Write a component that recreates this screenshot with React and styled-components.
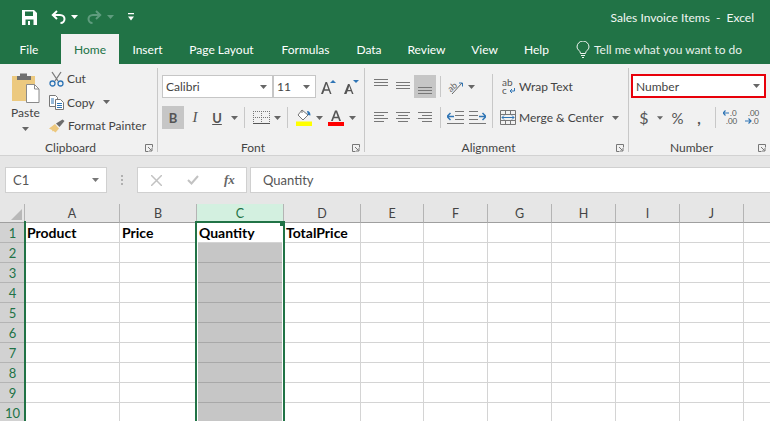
import React from "react";
import styled, { createGlobalStyle } from "styled-components";

const GlobalStyle = createGlobalStyle`
  html, body { margin: 0; padding: 0; background: #fff; }
  * { box-sizing: border-box; }
`;

const UI = `Lato, "Open Sans", sans-serif`;

const Page = styled.div`
  width: 770px;
  height: 421px;
  overflow: hidden;
  font-family: ${UI};
  font-size: 12px;
  color: #444;
  display: flex;
  flex-direction: column;
`;

const TitleBar = styled.div`
  height: 34px;
  background: #217346;
  display: flex;
  align-items: center;
  padding-left: 22px;
  color: #fff;
`;

const QuickTool = styled.span`
  display: flex;
  margin-right: ${(p) => p.$mr || 0}px;
`;

const DocTitle = styled.div`
  margin-left: auto;
  margin-right: 16px;
  font-size: 12px;
  white-space: pre;
  color: #f2f7f4;
`;

const TabBar = styled.div`
  height: 30px;
  background: #217346;
  display: flex;
  padding-left: 8px;
  color: #fff;
`;

const Tab = styled.div`
  width: ${(p) => p.$w}px;
  margin-right: ${(p) => p.$mr ?? 3}px;
  display: flex;
  align-items: center;
  justify-content: center;
  font-size: 12px;
  white-space: nowrap;
  background: ${(p) => (p.$active ? "#f1f1f1" : "transparent")};
  color: ${(p) => (p.$active ? "#217346" : "#fff")};
`;

const TellMe = styled.div`
  display: flex;
  align-items: center;
  gap: 4px;
  margin-left: 12px;
  font-size: 12px;
  white-space: nowrap;
  color: #e8f1ec;
`;

const Ribbon = styled.div`
  height: 92px;
  background: #f1f1f1;
  border-bottom: 1px solid #d2d2d2;
  display: flex;
  padding-top: 4px;
`;

const Group = styled.section`
  width: ${(p) => p.$w}px;
  height: 84px;
  flex: none;
  display: flex;
  flex-direction: column;
  border-right: ${(p) => (p.$last ? "none" : "1px solid #c8c8c8")};
  padding-left: ${(p) => p.$pl || 0}px;
`;

const GroupBody = styled.div`
  flex: 1;
  display: flex;
  flex-direction: column;
  min-height: 0;
`;

const GroupFooter = styled.div`
  height: 14px;
  flex: none;
  margin-bottom: -2px;
  margin-left: ${(p) => -(p.$pl || 0)}px;
  display: grid;
  grid-template-columns: 1fr auto 1fr;
  align-items: center;
  font-size: 12px;
  color: #444;
  padding-right: 4px;
`;

const GroupName = styled.span`
  grid-column: 2;
  transform: translateX(${(p) => p.$dx || 0}px);
`;

const Launcher = styled.span`
  grid-column: 3;
  justify-self: end;
  display: flex;
`;

const ToolRow = styled.div`
  display: flex;
  align-items: center;
  height: 23px;
  margin-top: ${(p) => p.$mt || 0}px;
`;

const Tool = styled.div`
  width: ${(p) => p.$w}px;
  height: 23px;
  flex: none;
  display: flex;
  align-items: center;
  justify-content: center;
  background: ${(p) => (p.$on ? "#c6c6c6" : "transparent")};
  font-size: ${(p) => p.$size || 13}px;
  color: #555;
`;

const ItalicTool = styled(Tool)`
  font-style: italic;
  font-family: "Liberation Serif", serif;
  font-size: 15px;
`;

const UnderlineTool = styled(Tool)`
  text-decoration: underline;
`;

const Divider = styled.div`
  width: 1px;
  height: 21px;
  flex: none;
  background: #c8c8c8;
  margin: 0 ${(p) => p.$mr ?? 4}px 0 ${(p) => p.$ml ?? 4}px;
`;

// runs through both tool rows, the second row leaves a gap for it
const TallDivider = styled(Divider)`
  height: 54px;
  align-self: flex-start;
  margin-top: -1px;
`;

const DividerGap = styled.div`
  width: 1px;
  flex: none;
  margin: 0 ${(p) => p.$mr}px 0 ${(p) => p.$ml}px;
`;

const Combo = styled.div`
  width: ${(p) => p.$w}px;
  height: 23px;
  flex: none;
  background: #fff;
  border: 1px solid #c6c6c6;
  display: flex;
  align-items: center;
  justify-content: space-between;
  padding: 0 5px 0 3px;
  font-size: 12px;
  color: #444;
`;

const HighlightCombo = styled(Combo)`
  height: 24px;
  border: 2px solid #e8000a;
  padding: 0 4px 0 3px;
  margin-top: -1px;
`;

const ClipboardBody = styled.div`
  flex: 1;
  display: flex;
`;

const PasteButton = styled.div`
  width: 49px;
  flex: none;
  display: flex;
  flex-direction: column;
  align-items: center;
  padding: 4px 0 0 2px;
  font-size: 12px;
  line-height: 16px;
`;

const PasteLabel = styled.span`
  margin: 2px 0 6px;
`;

const ClipActions = styled.div`
  display: flex;
  flex-direction: column;
  margin-top: -1px;
`;

const ClipAction = styled.div`
  height: 23.5px;
  display: flex;
  align-items: center;
  gap: 3px;
  white-space: nowrap;
  font-size: 12px;
`;

const CopyCaret = styled.span`
  display: flex;
  margin-left: 6px;
`;

const LabelledTool = styled.div`
  display: flex;
  align-items: center;
  gap: 3px;
  white-space: nowrap;
  font-size: 12px;
  margin-left: ${(p) => p.$ml || 0}px;
`;

const FormulaStrip = styled.div`
  height: 48px;
  background: #e6e6e6;
  display: flex;
  align-items: flex-start;
  padding: 11px 0 0 5px;
`;

const NameBox = styled.div`
  width: 102px;
  height: 26px;
  background: #fff;
  border: 1px solid #d0d0d0;
  display: flex;
  align-items: center;
  justify-content: space-between;
  padding: 0 7px;
  font-size: 13px;
  color: #555;
`;

const Grip = styled.div`
  width: 30px;
  height: 26px;
  display: flex;
  align-items: center;
  justify-content: center;
`;

const FormulaTools = styled.div`
  width: 110px;
  height: 26px;
  background: #fff;
  border: 1px solid #d0d0d0;
  display: flex;
  align-items: center;
  gap: 25px;
  padding-left: 13px;
  margin-right: 3px;
`;

const FormulaInput = styled.div`
  flex: 1;
  height: 26px;
  background: #fff;
  border: 1px solid #d0d0d0;
  border-right: none;
  display: flex;
  align-items: center;
  padding-left: 12px;
  font-size: 13px;
  color: #555;
`;

const FxLabel = styled.span`
  font-family: "Liberation Serif", serif;
  font-style: italic;
  font-size: 13px;
  color: #666;
  font-weight: bold;
`;

const Sheet = styled.div`
  position: relative;
  flex: 1;
  display: grid;
  grid-template-columns: 25px 95px 77px 87px 77px 63px 64px 64px 64px 64px 64px 64px;
  grid-auto-rows: 20px;
  grid-template-rows: 19px;
  background: #fff;
  overflow: hidden;
`;

const Corner = styled.div`
  background: #e6e6e6;
  border-bottom: 1px solid #9f9f9f;
  border-right: 1px solid #b4b4b4;
  position: relative;
  &::after {
    content: "";
    position: absolute;
    right: 2px;
    bottom: 2px;
    border-style: solid;
    border-width: 0 0 11px 11px;
    border-color: transparent transparent #b8b8b8 transparent;
  }
`;

const ColHeader = styled.div`
  background: ${(p) => (p.$on ? "#d3f0e0" : "#e6e6e6")};
  color: ${(p) => (p.$on ? "#217346" : "#444")};
  border-right: 1px solid #b4b4b4;
  border-bottom: 1px solid #9f9f9f;
  display: flex;
  align-items: center;
  justify-content: center;
  font-size: 12.5px;
`;

const RowHeader = styled.div`
  background: #d2d2d2;
  color: #217346;
  border-bottom: 1px solid #b4b4b4;
  display: flex;
  align-items: center;
  justify-content: center;
  font-size: 13px;
`;

const Cell = styled.div`
  background: ${(p) => (p.$fill ? "#c6c6c6" : "#fff")};
  border-right: 1px solid #d4d4d4;
  border-bottom: 1px solid ${(p) => (p.$fill ? "#a8a8a8" : "#d4d4d4")};
  color: #000;
  font-weight: 700;
  font-size: 14px;
  display: flex;
  align-items: center;
  padding-left: 2px;
  white-space: nowrap;
`;

// selection frame sits over column C and row header edge
const SelectionFrame = styled.div`
  position: absolute;
  left: 195px;
  top: 17px;
  width: 90px;
  bottom: -4px;
  border: 2px solid #217346;
  box-shadow: inset 0 0 0 1px #fff;
  pointer-events: none;
`;

const FillHandle = styled.div`
  position: absolute;
  right: -2px;
  top: -2px;
  width: 5px;
  height: 5px;
  background: #217346;
`;

const RowEdge = styled.div`
  position: absolute;
  left: 24px;
  top: 17px;
  bottom: 0;
  width: 2px;
  background: #217346;
`;

const Caret = ({ color = "#666" }) => (
  <svg width="7" height="4" viewBox="0 0 7 4">
    <path d="M0 0h7L3.5 4z" fill={color} />
  </svg>
);

const LauncherIcon = () => (
  <svg width="8" height="8" viewBox="0 0 8 8" fill="none" stroke="#777">
    <path d="M.5 3V.5h7v3M.5 3v4.5h3" strokeWidth="1" />
    <path d="M3 3l3.5 3.5M7 4v3H4" strokeWidth="1" />
  </svg>
);

const Save = () => (
  <svg width="15" height="15" viewBox="0 0 15 15">
    <path d="M0 0h12l3 3v12H0z" fill="#fff" />
    <path d="M3 1.5h8v4.5H3z" fill="#217346" />
    <path d="M3.5 9.5h8V15h-8z" fill="#217346" />
    <path d="M6 11h2v4H6z" fill="#fff" />
  </svg>
);

const Undo = ({ color = "#fff" }) => (
  <svg width="15" height="14" viewBox="0 0 15 14" fill="none" stroke={color} strokeWidth="2">
    <path d="M6 1L1.8 5 6 9" />
    <path d="M2 5h7c3 0 4.5 2 4.5 4s-1.5 4-4 4" />
  </svg>
);

const Redo = ({ color = "#5f9c7e" }) => (
  <svg width="15" height="14" viewBox="0 0 15 14" fill="none" stroke={color} strokeWidth="2">
    <path d="M9 1l4.2 4L9 9" />
    <path d="M13 5H6C3 5 1.5 7 1.5 9s1.500 4 4 4" />
  </svg>
);

const Customize = () => (
  <svg width="6" height="8" viewBox="0 0 6 8" fill="#fff">
    <path d="M0 0h6v1.200H0zM0 3.500h6L3 7.500z" />
  </svg>
);

const Bulb = () => (
  <svg width="14" height="17" viewBox="0 0 14 17" fill="none" stroke="#f0f5f2" strokeWidth="1">
    <path d="M4.500 12.500C4.500 9.500 1 9 1 6a6 6 0 0 1 12 0c0 3-3.500 3.500-3.500 6.500z" />
    <path d="M5 14.500h4M6 16.500h2" />
  </svg>
);

const PasteIcon = () => (
  <svg width="29" height="31" viewBox="0 0 29 31">
    <path d="M1 4h23v25H1z" fill="#ecc97f" />
    <path d="M6 4h3V1.500h7V4h4v4H6z" fill="#6f6f6f" />
    <path d="M15.500 12.500h8l4.500 4.500v13.500H15.500z" fill="#fff" stroke="#8a8a8a" />
    <path d="M23.500 12.500V17H28" fill="none" stroke="#8a8a8a" />
  </svg>
);

const CutIcon = () => (
  <svg width="15" height="16" viewBox="0 0 15 16" fill="none">
    <path d="M3 1l6 9M12 1L6 10" stroke="#7a7a7a" strokeWidth="1.300" />
    <circle cx="3.500" cy="12.500" r="2.500" stroke="#2f75b5" strokeWidth="1.300" />
    <circle cx="11.500" cy="12.500" r="2.500" stroke="#2f75b5" strokeWidth="1.300" />
  </svg>
);

const CopyIcon = () => (
  <svg width="15" height="15" viewBox="0 0 15 15" fill="none">
    <path d="M.5.500h6l2 2v9H.5z" fill="#fff" stroke="#777" />
    <path d="M6.500 4.500h5l3 3v7h-8z" fill="#fff" stroke="#777" />
    <path d="M8 8.500h5M8 10.500h5M8 12.500h5M2 4h3M2 6h3M2 8h3" stroke="#2f75b5" />
  </svg>
);

const PainterIcon = () => (
  <svg width="16" height="14" viewBox="0 0 16 14">
    <path d="M0 9.500L6 5l4 4.500-3.500 4-2-1.500-1 .500-.5-1.500z" fill="#edc87e" />
    <path d="M7 4.500l3.500 3.500L15.500 2 13.500.500z" fill="#6d6d6d" />
  </svg>
);

const GrowA = ({ down }) => (
  <svg width="15" height="16" viewBox="0 0 15 16">
    <path
      d={down ? "M0 15L4 5h1.500l4 10H8l-1-2.800H3.500L2.500 15zM4 11h2.600L5.300 7z" : "M0 15L4.500 3h1.500l4.500 12H9l-1.200-3.300H3.200L2 15zM3.700 10.300h3.600L5.300 5z"}
      fill="#555"
    />
    <path d={down ? "M9 1h6l-3 3z" : "M9 4h6l-3-3z"} fill="#2f75b5" />
  </svg>
);

const BorderIcon = () => (
  <svg width="17" height="13" viewBox="0 0 17 13" fill="none" stroke="#777" strokeDasharray="1 1">
    <path d="M.5 0v12M8.500 0v12M16.500 0v12M0 .500h17M0 6.500h17" />
    <path d="M0 12.500h17" strokeDasharray="none" stroke="#555" />
  </svg>
);

const FillIcon = () => (
  <svg width="16" height="17" viewBox="0 0 16 17">
    <path d="M6 1l6 5-5 5-5-5z" fill="#fff" stroke="#777" />
    <path d="M6 1v3" stroke="#777" />
    <path d="M11 2c2.500 0 3.500 2 3.500 4.500L12 6z" fill="#2f75b5" />
    <path d="M0 12.500h16V17H0z" fill="#ffff00" />
  </svg>
);

const FontColorIcon = () => (
  <svg width="16" height="17" viewBox="0 0 16 17">
    <path d="M3 12L7 1.500h2L13 12h-1.800l-1-2.800H5.800L4.800 12zM6.400 7.700h3.200L8 3.300z" fill="#555" />
    <path d="M0 13h16v4H0z" fill="#ff0000" />
  </svg>
);

const Lines = ({ rows, w = 14 }) => (
  <svg width={w} height="15" viewBox={`0 0 ${w} 15`} stroke="#777">
    {rows.map(([x1, x2, y]) => (
      <path key={y} d={`M${x1} ${y}.5H${x2}`} />
    ))}
  </svg>
);

const OrientIcon = () => (
  <svg width="17" height="16" viewBox="0 0 17 16" fill="none">
    <text x="1" y="10" fontFamily="Lato, sans-serif" fontSize="9" fill="#666" transform="rotate(-40 7 8)">ab</text>
    <path d="M5 15L15 4" stroke="#666" />
    <path d="M12 4h3.500v3.500" stroke="#2f75b5" />
  </svg>
);

const IndentIcon = ({ flip }) => (
  <svg width="17" height="13" viewBox="0 0 17 13" fill="none" style={{ transform: flip ? "scaleX(-1)" : "none" }}>
    <path d="M8 .5h9M8 4.500h9M8 8.500h9M0 12.500h17" stroke="#777" />
    <path d="M0 5.500h7M3.500 2L0 5.500 3.500 9" stroke="#2f75b5" strokeWidth="1.500" />
  </svg>
);

const WrapIcon = () => (
  <svg width="14" height="17" viewBox="0 0 14 17">
    <text x="0" y="8" fontFamily="Lato, sans-serif" fontSize="10" fill="#555">ab</text>
    <text x="0" y="16" fontFamily="Lato, sans-serif" fontSize="10" fill="#555">c</text>
    <path d="M12.500 10v3H8M10 11l-2 2 2 2" fill="none" stroke="#2f75b5" />
  </svg>
);

const MergeIcon = () => (
  <svg width="16" height="15" viewBox="0 0 16 15" fill="none">
    <path d="M.5.500h15v14H.5zM.5 4.500h15M.5 10.500h15M5.500.500v4M10.500.500v4M5.500 10.500v4M10.500 10.500v4" stroke="#777" />
    <path d="M2 7.500h12M4 5.500l-2 2 2 2M12 5.500l2 2-2 2" stroke="#2f75b5" />
  </svg>
);

const DecimalIcon = ({ more }) => (
  <svg width="15" height="15" viewBox="0 0 15 15" fontFamily="Lato, sans-serif" fontSize="8" fill="#555">
    <text x={more ? 3 : 7} y="6">{more ? ".00" : ".0"}</text>
    <text x={more ? 7 : 3} y="14">{more ? ".0" : ".00"}</text>
    <path d={more ? "M0 11h6M3.500 8.500L6 11l-2.500 2.500" : "M0 3h6M2.500.500L0 3l2.500 2.500"} fill="none" stroke="#2f75b5" strokeWidth="1.200" />
  </svg>
);

const CrossIcon = () => (
  <svg width="11" height="11" viewBox="0 0 11 11" stroke="#c2c2c2" strokeWidth="1.500">
    <path d="M0 0l11 11M11 0L0 11" />
  </svg>
);

const CheckIcon = () => (
  <svg width="12" height="10" viewBox="0 0 12 10" fill="none" stroke="#c2c2c2" strokeWidth="2">
    <path d="M1 5l3.500 3.500L11 1" />
  </svg>
);

const GripDots = () => (
  <svg width="2" height="10" viewBox="0 0 2 10" fill="#b0b0b0">
    <path d="M0 0h2v2H0zM0 4h2v2H0zM0 8h2v2H0z" />
  </svg>
);

const columns = ["A", "B", "C", "D", "E", "F", "G", "H", "I", "J", "K"];
const headings = { A: "Product", B: "Price", C: "Quantity", D: "TotalPrice" };
const rows = [1, 2, 3, 4, 5, 6, 7, 8, 9, 10];

const tabs = [
  { label: "File", w: 42, mr: 11 },
  { label: "Home", w: 58, mr: 2, active: true },
  { label: "Insert", w: 53 },
  { label: "Page Layout", w: 89 },
  { label: "Formulas", w: 73 },
  { label: "Data", w: 48 },
  { label: "Review", w: 61 },
  { label: "View", w: 49 },
  { label: "Help", w: 49 },
];

export default function App() {
  return (
    <Page>
      <GlobalStyle />
      <TitleBar>
        <QuickTool $mr={14}><Save /></QuickTool>
        <QuickTool $mr={5}><Undo /></QuickTool>
        <QuickTool $mr={9}><Caret color="#fff" /></QuickTool>
        <QuickTool $mr={5}><Redo /></QuickTool>
        <QuickTool $mr={14}><Caret color="#5f9c7e" /></QuickTool>
        <QuickTool><Customize /></QuickTool>
        <DocTitle>Sales Invoice Items  -  Excel</DocTitle>
      </TitleBar>

      <TabBar>
        {tabs.map((t) => (
          <Tab key={t.label} $w={t.w} $mr={t.mr} $active={t.active}>{t.label}</Tab>
        ))}
        <TellMe><Bulb />Tell me what you want to do</TellMe>
      </TabBar>

      <Ribbon>
        <Group $w={158}>
          <GroupBody>
            <ClipboardBody>
              <PasteButton>
                <PasteIcon />
                <PasteLabel>Paste</PasteLabel>
                <Caret />
              </PasteButton>
              <ClipActions>
                <ClipAction><CutIcon />Cut</ClipAction>
                <ClipAction><CopyIcon />Copy<CopyCaret><Caret /></CopyCaret></ClipAction>
                <ClipAction><PainterIcon />Format Painter</ClipAction>
              </ClipActions>
            </ClipboardBody>
          </GroupBody>
          <GroupFooter>
            <GroupName $dx={-6}>Clipboard</GroupName>
            <Launcher><LauncherIcon /></Launcher>
          </GroupFooter>
        </Group>

        <Group $w={207} $pl={4}>
          <GroupBody>
            <ToolRow $mt={7}>
              <Combo $w={111}>Calibri<Caret /></Combo>
              <Combo $w={43}>11<Caret /></Combo>
              <Tool $w={25}><GrowA /></Tool>
              <Tool $w={20}><GrowA down /></Tool>
            </ToolRow>
            <ToolRow $mt={8}>
              <Tool $w={22} $on><b>B</b></Tool>
              <ItalicTool $w={22}>I</ItalicTool>
              <UnderlineTool $w={22}><b>U</b></UnderlineTool>
              <Tool $w={12}><Caret /></Tool>
              <Divider $ml={4} $mr={7} />
              <Tool $w={18}><BorderIcon /></Tool>
              <Tool $w={14}><Caret /></Tool>
              <Divider $ml={3} $mr={8} />
              <Tool $w={16}><FillIcon /></Tool>
              <Tool $w={14}><Caret /></Tool>
              <Tool $w={20}><FontColorIcon /></Tool>
              <Tool $w={12}><Caret /></Tool>
            </ToolRow>
          </GroupBody>
          <GroupFooter $pl={4}>
            <GroupName $dx={-6}>Font</GroupName>
            <Launcher><LauncherIcon /></Launcher>
          </GroupFooter>
        </Group>

        <Group $w={264} $pl={5}>
          <GroupBody>
            <ToolRow $mt={7}>
              <Tool $w={22}><Lines rows={[[0, 14, 0], [0, 14, 3], [0, 14, 6]]} /></Tool>
              <Tool $w={22}><Lines rows={[[0, 14, 3], [0, 14, 6], [0, 14, 9]]} /></Tool>
              <Tool $w={22} $on><Lines rows={[[0, 14, 8], [0, 14, 11], [0, 14, 14]]} /></Tool>
              <Divider $ml={4} $mr={6} />
              <Tool $w={17}><OrientIcon /></Tool>
              <Tool $w={14}><Caret /></Tool>
              <TallDivider $ml={14} $mr={9} />
              <LabelledTool><WrapIcon />Wrap Text</LabelledTool>
            </ToolRow>
            <ToolRow $mt={8}>
              <Tool $w={22}><Lines rows={[[0, 14, 2], [0, 10, 5], [0, 14, 8], [0, 10, 11]]} /></Tool>
              <Tool $w={22}><Lines rows={[[0, 14, 2], [2, 12, 5], [0, 14, 8], [2, 12, 11]]} /></Tool>
              <Tool $w={22}><Lines rows={[[0, 14, 2], [4, 14, 5], [0, 14, 8], [4, 14, 11]]} /></Tool>
              <Divider $ml={4} $mr={6} />
              <Tool $w={17}><IndentIcon /></Tool>
              <Tool $w={5} />
              <Tool $w={17}><IndentIcon flip /></Tool>
              <DividerGap $ml={6} $mr={7} />
              <LabelledTool><MergeIcon />Merge &amp; Center</LabelledTool>
              <LabelledTool $ml={8}><Caret /></LabelledTool>
            </ToolRow>
          </GroupBody>
          <GroupFooter $pl={5}>
            <GroupName $dx={-6}>Alignment</GroupName>
            <Launcher><LauncherIcon /></Launcher>
          </GroupFooter>
        </Group>

        <Group $w={141} $pl={2} $last>
          <GroupBody>
            <ToolRow $mt={7}>
              <HighlightCombo $w={135}>Number<Caret /></HighlightCombo>
            </ToolRow>
            <ToolRow $mt={8}>
              <Tool $w={26} $size={16}>$</Tool>
              <Tool $w={6}><Caret /></Tool>
              <Tool $w={29} $size={15}>%</Tool>
              <Tool $w={14} $size={15}><b>,</b></Tool>
              <Divider $ml={9} $mr={7} />
              <Tool $w={15}><DecimalIcon /></Tool>
              <Tool $w={7} />
              <Tool $w={15}><DecimalIcon more /></Tool>
            </ToolRow>
          </GroupBody>
          <GroupFooter $pl={2}>
            <GroupName $dx={-6}>Number</GroupName>
            <Launcher><LauncherIcon /></Launcher>
          </GroupFooter>
        </Group>
      </Ribbon>

      <FormulaStrip>
        <NameBox>C1<Caret color="#777" /></NameBox>
        <Grip><GripDots /></Grip>
        <FormulaTools>
          <CrossIcon />
          <CheckIcon />
          <FxLabel>fx</FxLabel>
        </FormulaTools>
        <FormulaInput>Quantity</FormulaInput>
      </FormulaStrip>

      <Sheet>
        <Corner />
        {columns.map((c) => (
          <ColHeader key={c} $on={c === "C"}>{c}</ColHeader>
        ))}
        {rows.map((r) => (
          <React.Fragment key={r}>
            <RowHeader>{r}</RowHeader>
            {columns.map((c) => (
              <Cell key={c} $fill={c === "C" && r > 1}>
                {r === 1 ? headings[c] : null}
              </Cell>
            ))}
          </React.Fragment>
        ))}
        <RowEdge />
        <SelectionFrame><FillHandle /></SelectionFrame>
      </Sheet>
    </Page>
  );
}
